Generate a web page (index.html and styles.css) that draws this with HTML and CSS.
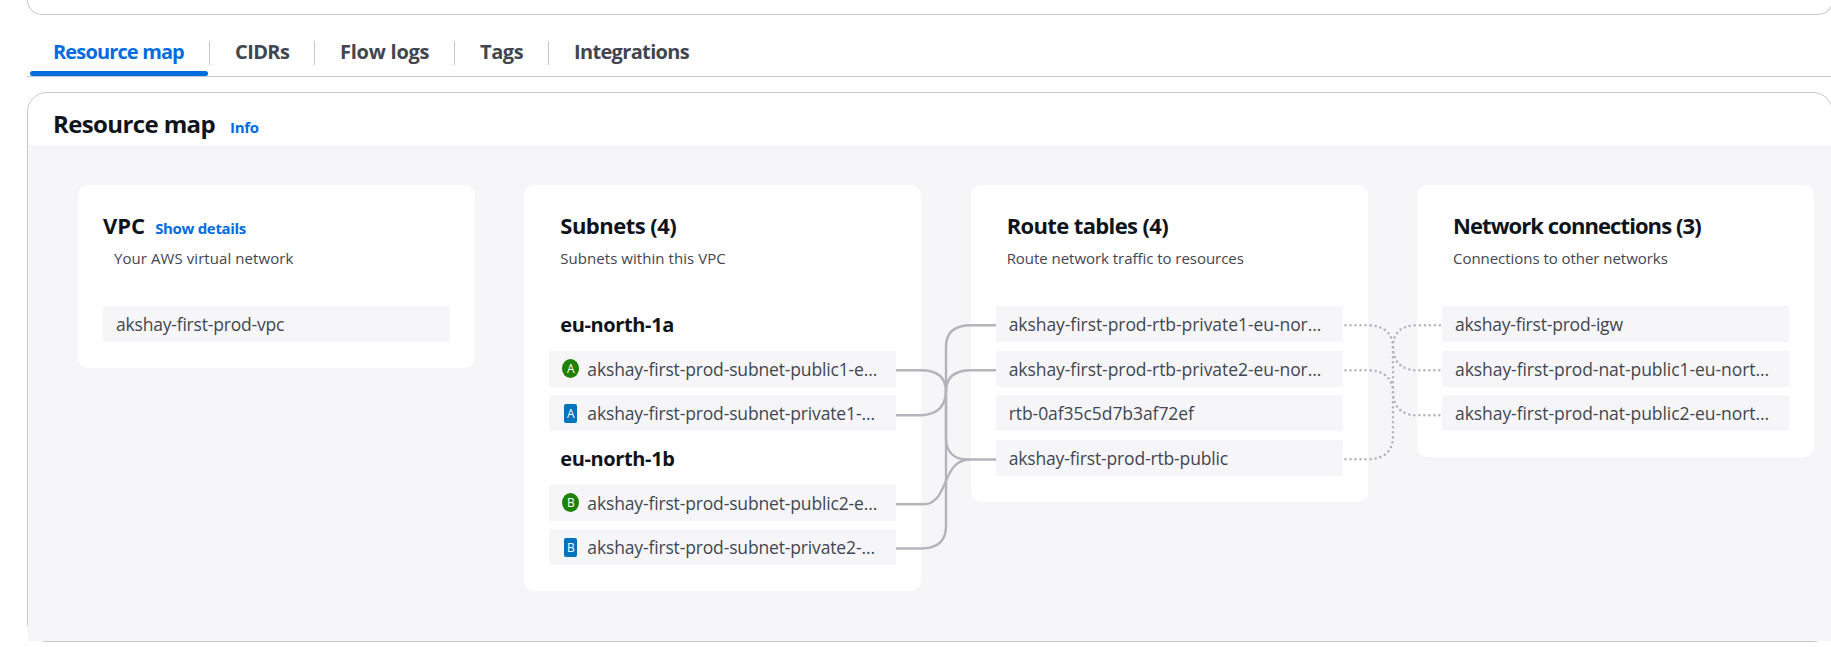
FILE: index.html
```html
<!DOCTYPE html>
<html lang="en">
<head>
<meta charset="utf-8">
<title>Resource map</title>
<link rel="stylesheet" href="styles.css">
</head>
<body>
<div class="details-card"></div>
<nav class="tabs">
  <a class="tab tab-active">Resource map</a>
  <a class="tab tab-cidrs">CIDRs</a>
  <a class="tab tab-flow">Flow logs</a>
  <a class="tab tab-tags">Tags</a>
  <a class="tab tab-int">Integrations</a>
</nav>
<section class="panel">
  <header class="panel-header"><h2 class="panel-title">Resource map</h2><a class="link">Info</a></header>
  <div class="map">
    <article class="card">
      <div class="card-head"><h3 class="title title-vpc">VPC</h3><a class="link">Show details</a></div>
      <p class="sub sub-vpc">Your AWS virtual network</p>
      <div class="rows"><div class="row row-short">akshay-first-prod-vpc</div></div>
    </article>
    <article class="card">
      <div class="card-head inset"><h3 class="title title-subnets">Subnets (4)</h3></div>
      <p class="sub">Subnets within this VPC</p>
      <div class="rows">
        <h4 class="zone">eu-north-1a</h4>
        <div class="row row-subnet"><i class="badge public">A</i>akshay-first-prod-subnet-public1-e…</div>
        <div class="row row-subnet"><i class="badge private">A</i>akshay-first-prod-subnet-private1-…</div>
        <h4 class="zone">eu-north-1b</h4>
        <div class="row row-subnet"><i class="badge public">B</i>akshay-first-prod-subnet-public2-e…</div>
        <div class="row row-subnet"><i class="badge private">B</i>akshay-first-prod-subnet-private2-…</div>
      </div>
    </article>
    <article class="card">
      <div class="card-head inset"><h3 class="title title-routes">Route tables (4)</h3></div>
      <p class="sub sub-routes">Route network traffic to resources</p>
      <div class="rows">
        <div class="row">akshay-first-prod-rtb-private1-eu-nor…</div>
        <div class="row">akshay-first-prod-rtb-private2-eu-nor…</div>
        <div class="row">rtb-0af35c5d7b3af72ef</div>
        <div class="row row-subnet">akshay-first-prod-rtb-public</div>
      </div>
    </article>
    <article class="card">
      <div class="card-head inset"><h3 class="title title-net">Network connections (3)</h3></div>
      <p class="sub sub-routes">Connections to other networks</p>
      <div class="rows">
        <div class="row row-short">akshay-first-prod-igw</div>
        <div class="row">akshay-first-prod-nat-public1-eu-nort…</div>
        <div class="row">akshay-first-prod-nat-public2-eu-nort…</div>
      </div>
    </article>
    <svg class="wires" viewBox="28 145 1803 496" width="1803" height="496">
      <g class="solid">
        <path d="M896 370.3H921C938 370.3 946 378 946 392V438C946 452 954 459.5 967 459.5H996"/>
        <path d="M896 415.3H921C938 414.5 946 406 946 390V347C946 333 954 325.3 971 325.3H996"/>
        <path d="M896 504.3H923C936 504.3 941 493 946 481C951 469 956 459.5 971 459.5"/>
        <path d="M896 548.5H921C937 548.5 946 541 946 526V392C946 378 954 370.3 971 370.3H996"/>
      </g>
      <g class="dotted">
        <path d="M1345.5 325.3H1368C1383 325.3 1393 333 1393 347C1393 361 1401 370.3 1417 370.3H1441"/>
        <path d="M1345.5 370.3H1368C1383 370.3 1393 378 1393 392C1393 406 1401 415.3 1417 415.3H1441"/>
        <path d="M1345.5 459.3H1368C1383 459.3 1393 452 1393 436V347C1393 333 1401 325.3 1417 325.3H1441"/>
      </g>
    </svg>
  </div>
</section>
</body>
</html>
```
FILE: styles.css
```css
* { box-sizing: border-box; }
body {
  margin: 0;
  height: 647px;
  overflow: hidden;
  background: #fff;
  color: #424650;
  font-family: "Open Sans", "Noto Sans", sans-serif;
  font-size: 17.5px;
  white-space: nowrap;
}
h2, h3, h4, p { margin: 0; }
.details-card {
  width: 1806px;
  height: 15px;
  margin-left: 27px;
  border: 1px solid #c6c6cd;
  border-top: 0;
  border-radius: 0 0 20px 20px;
}
.tabs {
  display: flex;
  height: 62px;
  margin-left: 27px;
  padding-top: 26px;
  border-bottom: 1px solid #c6c6cd;
  font-size: 20px;
  font-weight: 700;
  line-height: 22px;
}
.tab { position: relative; height: 24px; padding-left: 25px; border-right: 1px solid #c6c6cd; }
.tab-active { width: 183px; padding-left: 26px; color: #006ce0; letter-spacing: -0.86px; }
.tab-active::after {
  content: "";
  position: absolute;
  left: 3px;
  top: 30px;
  width: 178px;
  height: 5px;
  border-radius: 2.5px;
  background: #006ce0;
}
.tab-cidrs { width: 105px; letter-spacing: -0.6px; }
.tab-flow { width: 140px; letter-spacing: -0.25px; }
.tab-tags { width: 94px; letter-spacing: -0.4px; }
.tab-int { border-right: 0; letter-spacing: -0.66px; }
.panel {
  width: 1806px;
  height: 550px;
  margin: 15px 0 0 27px;
  border: 1px solid #c6c6cd;
  border-radius: 20px;
}
.panel-header { display: flex; align-items: baseline; gap: 15px; height: 52px; padding: 13px 0 0 25px; }
.panel-title { font-size: 24px; line-height: 36px; letter-spacing: -0.62px; color: #0f141a; }
.link { color: #006ce0; font-size: 15px; font-weight: 700; letter-spacing: -0.32px; }
.map {
  position: relative;
  display: grid;
  grid-template-columns: repeat(4, 397px);
  gap: 49.33px;
  align-items: start;
  height: 496px;
  padding: 40px 0 0 50px;
  background: #f6f6f9;
}
.card { padding: 24px 25px 26px; border-radius: 10px; background: #fff; }
.card-head { display: flex; align-items: baseline; gap: 10px; height: 32px; }
.inset { padding-left: 11px; }
.title { font-size: 22px; line-height: 32px; color: #0f141a; }
.title-subnets { letter-spacing: -0.53px; }
.title-routes { letter-spacing: -0.63px; }
.title-net { letter-spacing: -0.92px; }
.sub { height: 22px; margin-top: 6px; padding-left: 11px; font-size: 15px; line-height: 22px; letter-spacing: 0.05px; }
.sub-vpc { letter-spacing: 0.07px; }
.sub-routes { letter-spacing: -0.04px; }
.rows { display: grid; grid-auto-rows: 36px; row-gap: 8.7px; margin-top: 37px; }
.row { display: flex; align-items: center; padding-left: 13px; border-radius: 2px; background: #f6f6f9; letter-spacing: -0.06px; }
.row-short { letter-spacing: -0.2px; }
.row-subnet { letter-spacing: -0.15px; }
.zone { padding-left: 11px; font-size: 20px; line-height: 38px; letter-spacing: -0.38px; color: #0f141a; }
.badge {
  display: grid;
  place-items: center;
  width: 17px;
  height: 19px;
  margin: 0 8px 0 0;
  border-radius: 50%;
  background: #1d8102;
  color: #fff;
  font: 500 12px/17px "Open Sans", sans-serif;
}
.private { width: 13px; margin: 0 10px 0 2px; border-radius: 2px; background: #0073bb; }
.wires { position: absolute; left: 0; top: 0; fill: none; stroke: #b4b4bb; }
.solid { stroke-width: 2.4; }
.dotted { stroke-width: 2.6; stroke-linecap: round; stroke-dasharray: 0 5; }
```
